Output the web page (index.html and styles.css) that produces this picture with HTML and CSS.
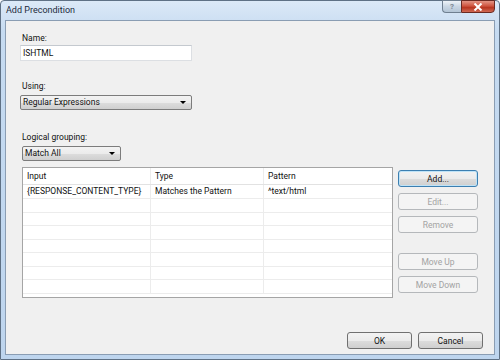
FILE: index.html
```html
<!DOCTYPE html>
<html>

<head>
    <title>Add Precondition</title>
    <link rel="stylesheet" href="styles.css">
</head>

<body>

    <div class="window">
        <div class="titlebar">
            <span class="title">Add Precondition</span>
            <div class="caption-buttons">
                <span class="help-btn">?</span>
                <span class="close-btn">
                    <svg width="10" height="8" viewBox="0 0 10 8">
                        <path d="M1.5 0.5 L8.5 7.5 M8.5 0.5 L1.5 7.5" stroke="#fff" stroke-width="2" />
                    </svg>
                </span>
            </div>
        </div>

        <div class="client">
            <div class="form-group">
                <label class="name-label">Name:</label>
                <div class="textbox">ISHTML</div>
            </div>

            <div class="form-group using">
                <label>Using:</label>
                <div class="combo wide">Regular Expressions<span class="arrow"></span></div>
            </div>

            <div class="form-group grouping">
                <label>Logical grouping:</label>
                <div class="combo small">Match All<span class="arrow"></span></div>
            </div>

            <div class="rules">
                <div class="list">
                    <table>
                        <tr class="head">
                            <td>Input</td>
                            <td>Type</td>
                            <td>Pattern</td>
                        </tr>
                        <tr>
                            <td>{RESPONSE_CONTENT_TYPE}</td>
                            <td>Matches the Pattern</td>
                            <td>^text/html</td>
                        </tr>
                        <tr><td></td><td></td><td></td></tr>
                        <tr><td></td><td></td><td></td></tr>
                        <tr><td></td><td></td><td></td></tr>
                        <tr><td></td><td></td><td></td></tr>
                        <tr><td></td><td></td><td></td></tr>
                        <tr><td></td><td></td><td></td></tr>
                        <tr><td></td><td></td><td></td></tr>
                    </table>
                </div>
                <div class="side-buttons">
                    <button class="default">Add...</button>
                    <button disabled>Edit...</button>
                    <button disabled>Remove</button>
                    <button disabled class="move-up">Move Up</button>
                    <button disabled>Move Down</button>
                </div>
            </div>

            <div class="footer">
                <button>OK</button>
                <button>Cancel</button>
            </div>
        </div>
    </div>

</body>

</html>
```

FILE: styles.css
```css
body {
    margin: 0;
    background: #fff;
    font-family: Roboto, "Open Sans", sans-serif;
    font-size: 8.5px;
    color: #111;
}

.window {
    width: 500px;
    height: 360px;
    box-sizing: border-box;
    border: 1px solid #5f7185;
    border-radius: 4px 4px 0 0;
    background: linear-gradient(#dce9f7, #c6dbf1 30px, #bed5ee);
    padding: 0 4px 4px 4px;
    display: flex;
    flex-direction: column;
}

.titlebar {
    height: 19px;
    display: flex;
    justify-content: space-between;
    align-items: flex-start;
}

.title {
    margin-top: 4px;
    margin-left: 1px;
    color: #1d2b3c;
    font-size: 9px;
}

.caption-buttons {
    display: flex;
    margin-top: -1px;
    margin-right: 0;
}

.help-btn {
    width: 19px;
    height: 13px;
    box-sizing: border-box;
    border: 1px solid #6f7f90;
    border-right: none;
    border-radius: 0 0 0 4px;
    background: linear-gradient(#eef3f8, #c9d6e3 50%, #b4c5d6);
    color: #7d8894;
    font-size: 8px;
    font-weight: bold;
    text-align: center;
    line-height: 11px;
}

.close-btn {
    width: 34px;
    height: 13px;
    box-sizing: border-box;
    border: 1px solid #6a2a22;
    border-radius: 0 0 4px 0;
    background: linear-gradient(#e39585, #cf5540 45%, #b83620 60%, #d06a55);
    display: flex;
    align-items: center;
    justify-content: center;
}

.client {
    flex: 1;
    background: #f0f0f0;
    border: 1px solid #8a9db3;
    padding: 11px 0 0 14px;
}

.form-group label {
    display: block;
    line-height: 12px;
    margin-left: 2px;
}

.name-label {
    margin-bottom: 1px;
}

.textbox {
    width: 172px;
    height: 16px;
    box-sizing: border-box;
    background: #fff;
    border: 1px solid #dcdfe3;
    border-top-color: #c4c9cf;
    padding-left: 2px;
    line-height: 14px;
}

.using {
    margin-top: 19px;
}

.grouping {
    margin-top: 21px;
}

.combo {
    position: relative;
    box-sizing: border-box;
    height: 15px;
    margin-top: 3px;
    border: 1px solid #7c7c7c;
    border-radius: 2px;
    background: linear-gradient(#f3f3f3, #ebebeb 50%, #dddddd 51%, #cfcfcf);
    padding-left: 2px;
    line-height: 13px;
}

.combo.wide {
    width: 172px;
}

.combo.small {
    width: 99px;
    margin-left: 2px;
}

.arrow {
    position: absolute;
    right: 5px;
    top: 5px;
    border-left: 3px solid transparent;
    border-right: 3px solid transparent;
    border-top: 3px solid #000;
}

.rules {
    display: flex;
    margin-top: 6px;
    margin-left: 2px;
}

.list {
    width: 371px;
    height: 131px;
    box-sizing: border-box;
    border: 1px solid #a5a5a5;
    background: #fff;
    overflow: hidden;
}

table {
    width: 100%;
    border-collapse: collapse;
    table-layout: fixed;
}

td {
    height: 13px;
    padding: 0 0 0 4px;
    border-bottom: 1px solid #ececec;
    border-right: 1px solid #ececec;
    line-height: 13px;
    white-space: nowrap;
}

tr:nth-child(even) td {
    height: 12px;
}

td:first-child {
    width: 123px;
}

td:nth-child(2) {
    width: 108px;
}

td:last-child {
    border-right: none;
}

tr.head td {
    height: 16px;
    border-bottom-color: #e2e2e2;
}

.side-buttons {
    display: flex;
    flex-direction: column;
    margin-left: 5px;
    padding-top: 3px;
}

button {
    font-family: inherit;
    font-size: 8.5px;
    color: #111;
    width: 80px;
    height: 17px;
    padding: 0;
    box-sizing: border-box;
    border: 1px solid #707070;
    border-radius: 3px;
    background: linear-gradient(#f2f2f2, #ebebeb 50%, #dddddd 51%, #cfcfcf);
    margin-bottom: 6px;
}

button.default {
    border-color: #3c7fb1;
    box-shadow: inset 0 0 0 1px #bfe3f7;
}

button:disabled {
    color: #a3a3a3;
    border-color: #b5b8bb;
    background: #f4f4f4;
}

button.move-up {
    margin-top: 14px;
}

.footer {
    display: flex;
    justify-content: flex-end;
    gap: 6px;
    margin-top: 33px;
    margin-right: 11px;
}

.footer button {
    width: 65px;
    margin: 0;
}
```
